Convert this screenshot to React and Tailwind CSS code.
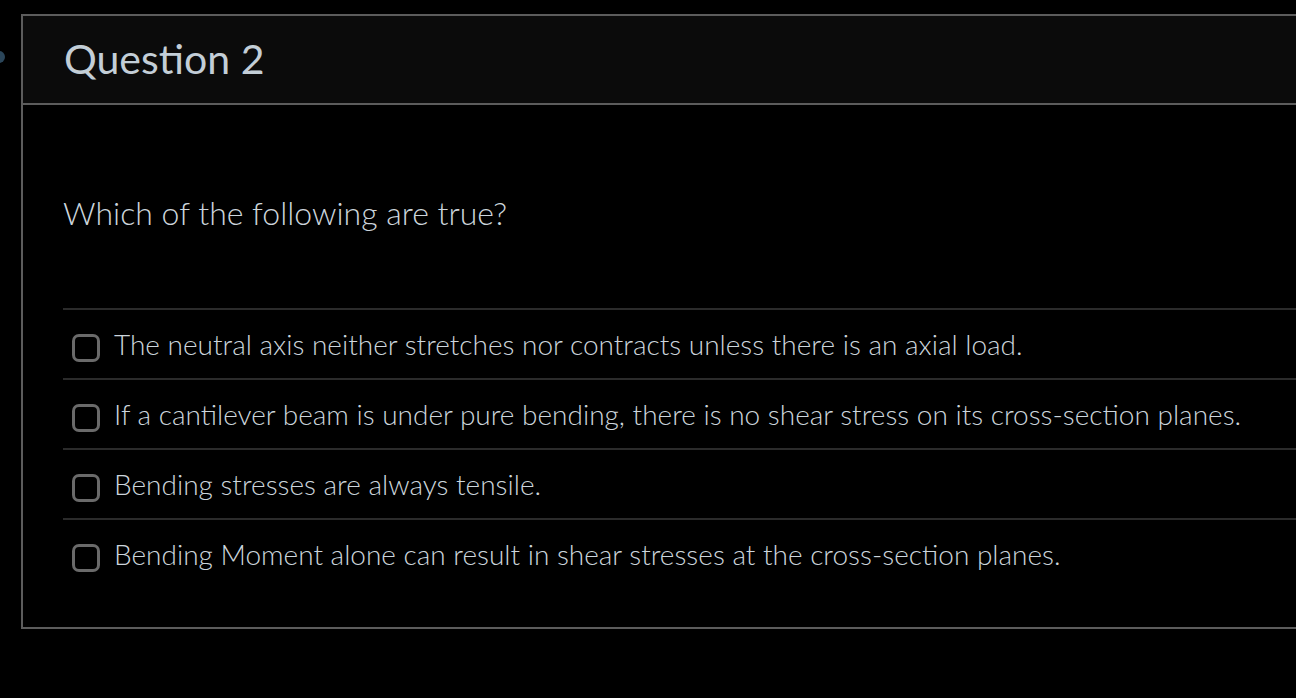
import React from 'react';

const options = [
  'The neutral axis neither stretches nor contracts unless there is an axial load.',
  'If a cantilever beam is under pure bending, there is no shear stress on its cross-section planes.',
  'Bending stresses are always tensile.',
  'Bending Moment alone can result in shear stresses at the cross-section planes.',
];

const Option = ({ text }) => (
  <label className="flex items-center h-[70px] border-t-2 border-[#2b2b2b]">
    <span className="ml-[9px] mt-[8px] w-[28px] h-[28px] rounded-[7px] border-[3px] border-[#6a6a6a] shrink-0" />
    <span className="ml-[14px] text-[28px] font-light text-[#ccd5dc] whitespace-nowrap">{text}</span>
  </label>
);

export default function App() {
  return (
    <div
      className="relative w-[1296px] h-[698px] bg-black overflow-hidden pt-[14px]"
      style={{ fontFamily: 'Lato, "Open Sans", sans-serif' }}
    >
      <div className="absolute left-[-7px] top-[51px] w-[12px] h-[12px] rounded-full bg-[#3d6480] opacity-70" />
      <div className="ml-[21px] w-[1400px] border-2 border-[#5c5c5c]">
        <div className="h-[89px] bg-[#0b0b0b] border-b-2 border-[#5c5c5c] flex items-center pl-[41px]">
          <h2 className="text-[41px] font-normal text-[#c3ced7] leading-none pb-[2px]">Question 2</h2>
        </div>
        <div className="pl-[40px] pt-[88px] pb-[39px]">
          <p className="text-[32px] font-light text-[#ccd5dc] leading-[40px]">Which of the following are true?</p>
          <div className="mt-[75px]">
            {options.map((o) => (
              <Option key={o} text={o} />
            ))}
          </div>
        </div>
      </div>
    </div>
  );
}
